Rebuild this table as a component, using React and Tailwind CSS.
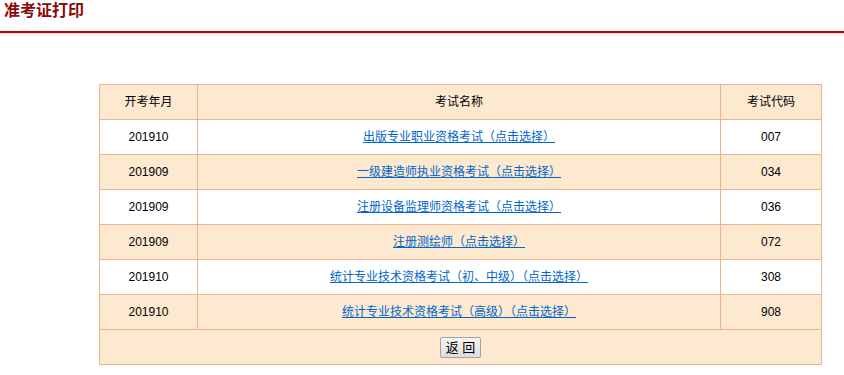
import React from 'react';

const rows = [
  { month: '201910', name: '出版专业职业资格考试（点击选择）', code: '007' },
  { month: '201909', name: '一级建造师执业资格考试（点击选择）', code: '034' },
  { month: '201909', name: '注册设备监理师资格考试（点击选择）', code: '036' },
  { month: '201909', name: '注册测绘师（点击选择）', code: '072' },
  { month: '201910', name: '统计专业技术资格考试（初、中级）（点击选择）', code: '308' },
  { month: '201910', name: '统计专业技术资格考试（高级）（点击选择）', code: '908' },
];

const cell = 'border border-[#f0b48c] text-center align-middle p-0';

export default function App() {
  return (
    <div className="bg-white min-h-[375px] text-[12px] text-black font-['Liberation_Sans','Noto_Sans_CJK_SC',sans-serif]">
      <div className="h-[31px] px-[4px] pt-[1px]">
        <h1 className="text-[16px] leading-[20px] font-bold text-[#8b0a0a]">准考证打印</h1>
      </div>
      <div className="h-[2px] bg-[#bb0000]" />
      <div className="h-[1px] bg-[#f6dcd6]" />

      <table className="mt-[50px] ml-[99px] w-[722px] table-fixed border-collapse">
        <colgroup>
          <col className="w-[98px]" />
          <col className="w-[523px]" />
          <col className="w-[101px]" />
        </colgroup>
        <thead>
          <tr className="h-[35px] bg-[#fde9d0]">
            <th className={`${cell} font-normal`}>开考年月</th>
            <th className={`${cell} font-normal`}>考试名称</th>
            <th className={`${cell} font-normal`}>考试代码</th>
          </tr>
        </thead>
        <tbody>
          {rows.map((r, i) => (
            <tr key={r.code} className={`h-[35px] ${i % 2 === 0 ? 'bg-white' : 'bg-[#fde9d0]'}`}>
              <td className={cell}>{r.month}</td>
              <td className={cell}>
                <a href="#" className="text-[#0066cc] underline">{r.name}</a>
              </td>
              <td className={cell}>{r.code}</td>
            </tr>
          ))}
          <tr className="h-[35px] bg-[#fde9d0]">
            <td colSpan={3} className={cell}>
              <button
                type="button"
                className="w-[41px] h-[21px] border border-[#a3a3a3] rounded-[2px] bg-gradient-to-b from-[#f6f6f6] to-[#dddddd] text-[13px] leading-[19px] text-black align-middle"
              >
                返 回
              </button>
            </td>
          </tr>
        </tbody>
      </table>
    </div>
  );
}
